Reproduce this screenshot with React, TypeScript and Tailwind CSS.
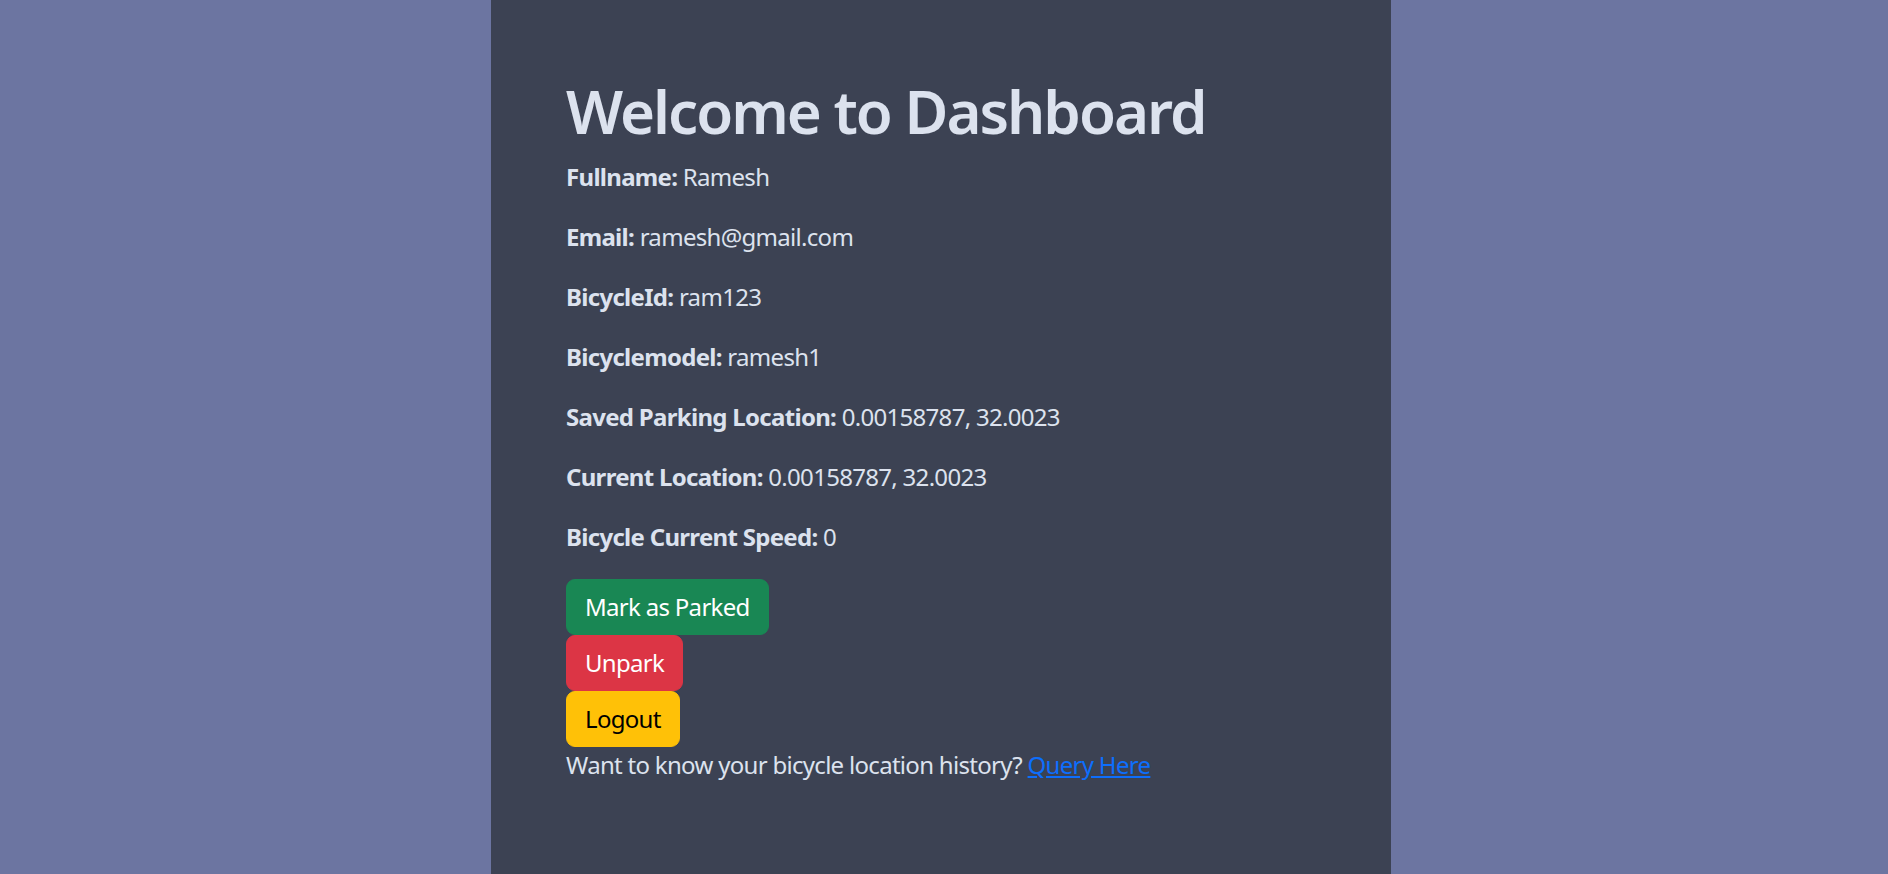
import React from "react";

const rows: [string, string][] = [
  ["Fullname:", "Ramesh"],
  ["Email:", "ramesh@gmail.com"],
  ["BicycleId:", "ram123"],
  ["Bicyclemodel:", "ramesh1"],
  ["Saved Parking Location:", "0.00158787, 32.0023"],
  ["Current Location:", "0.00158787, 32.0023"],
  ["Bicycle Current Speed:", "0"],
];

export default function App() {
  return (
    <div
      className="flex min-h-screen w-full justify-center bg-[#6c75a1] pr-[6px] text-[#dce2ee]"
      style={{ fontFamily: '"Noto Sans", "Open Sans", sans-serif' }}
    >
      <div className="min-h-screen w-[900px] bg-[#3c4253] px-[75px] pt-[75px] pb-[75px] tracking-[-0.7px]">
        <h1 className="mb-[12px] text-[60px] leading-[72px] font-semibold tracking-[-2px]">Welcome to Dashboard</h1>
        {rows.map(([k, v]) => (
          <p key={k} className="mb-[24px] text-[24px] leading-[36px]">
            <span className="font-bold">{k}</span> {v}
          </p>
        ))}
        <div className="flex flex-col items-start">
          <button className="rounded-[9px] border border-[#198754] bg-[#198754] px-[18px] py-[9px] text-[24px] leading-[36px] text-white">
            Mark as Parked
          </button>
          <button className="rounded-[9px] border border-[#dc3545] bg-[#dc3545] px-[18px] py-[9px] text-[24px] leading-[36px] text-white">
            Unpark
          </button>
          <button className="rounded-[9px] border border-[#ffc107] bg-[#ffc107] px-[18px] py-[9px] text-[24px] leading-[36px] text-black">
            Logout
          </button>
        </div>
        <p className="text-[24px] leading-[36px]">
          Want to know your bicycle location history?{" "}
          <a href="#" className="text-[#0d6efd] underline">
            Query Here
          </a>
        </p>
      </div>
    </div>
  );
}
